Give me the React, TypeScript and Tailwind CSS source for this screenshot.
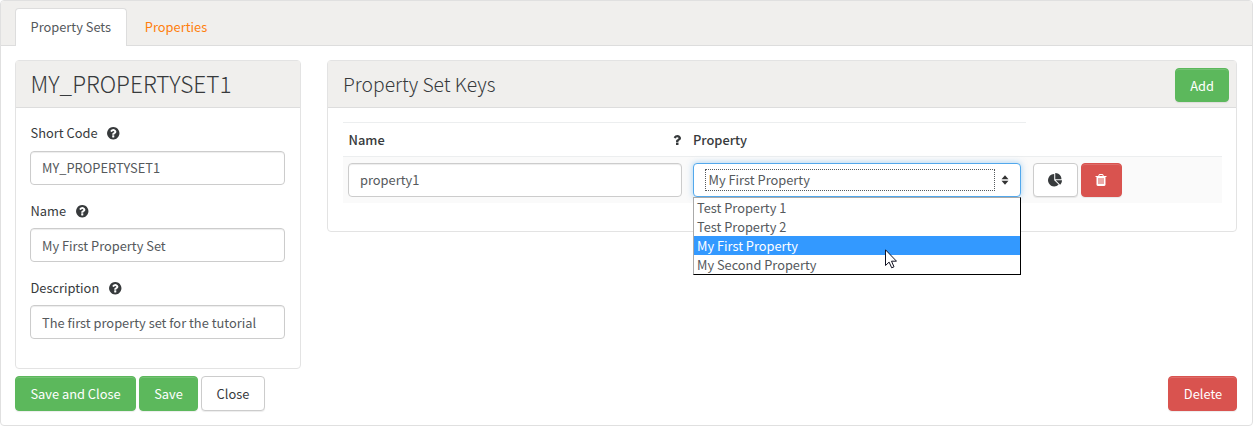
import type { ReactNode } from "react";

const QUESTION_CIRCLE =
  "M1024 1376v-192q0-14-9-23t-23-9h-192q-14 0-23 9t-9 23v192q0 14 9 23t23 9h192q14 0 23-9t9-23zm256-672q0-88-55.500-163t-138.500-116-170-41q-243 0-371 213-15 24 8 42l132 100q7 6 19 6 16 0 25-12 53-68 86-92 34-24 86-24 48 0 85.500 26t37.500 59q0 38-20 61t-68 45q-63 28-115.500 86.500t-52.500 125.500v36q0 14 9 23t23 9h192q14 0 23-9t9-23q0-19 21.500-49.500t54.500-49.500q32-18 49-28.500t46-35 44.500-48 28-60.500 12.500-81zm384 192q0 209-103 385.500t-279.500 279.500-385.500 103-385.500-103-279.500-279.500-103-385.500 103-385.500 279.500-279.500 385.500-103 385.500 103 279.500 279.500 103 385.500z";
const QUESTION =
  "M1088 1256v240q0 16-12 28t-28 12h-240q-16 0-28-12t-12-28v-240q0-16 12-28t28-12h240q16 0 28 12t12 28zm316-600q0 54-15.500 101t-35 76.500-55 59.500-57.500 43.500-61 35.500q-41 23-68.500 65t-27.500 67q0 17-12 32.500t-28 15.500h-240q-15 0-25.500-18.500t-10.500-37.500v-45q0-83 65-156.500t143-108.500q59-27 84-56t25-76q0-42-46.500-74t-107.500-32q-65 0-108 29-35 25-107 115-13 16-31 16-12 0-25-8l-164-125q-13-10-15.500-25t5.500-28q160-266 464-266 80 0 161 31t146 83 106 127.500 41 158.500z";
const PIE =
  "M768 890l546 546q-106 108-247.500 168t-298.500 60q-209 0-385.500-103t-279.500-279.500-103-385.500 103-385.500 279.500-279.500 385.500-103v762zm187 6h773q0 157-60 298.500t-168 247.500zm709-128h-768v-768q209 0 385.500 103t279.500 279.500 103 385.500z";
const TRASH =
  "M704 1376v-704q0-14-9-23t-23-9h-64q-14 0-23 9t-9 23v704q0 14 9 23t23 9h64q14 0 23-9t9-23zm256 0v-704q0-14-9-23t-23-9h-64q-14 0-23 9t-9 23v704q0 14 9 23t23 9h64q14 0 23-9t9-23zm256 0v-704q0-14-9-23t-23-9h-64q-14 0-23 9t-9 23v704q0 14 9 23t23 9h64q14 0 23-9t9-23zm-544-992h448l-48-117q-7-9-17-11h-317q-10 2-17 11zm928 32v64q0 14-9 23t-23 9h-96v948q0 83-47 143.500t-113 60.500h-832q-66 0-113-58.500t-47-141.500v-952h-96q-14 0-23-9t-9-23v-64q0-14 9-23t23-9h309l70-167q15-37 54-63t79-26h320q40 0 79 26t54 63l70 167h309q14 0 23 9t9 23z";

function Icon({ d, className }: { d: string; className: string }) {
  return (
    <svg viewBox="0 0 1792 1792" fill="currentColor" className={className} aria-hidden="true">
      <path d={d} />
    </svg>
  );
}

function Button({ tone, className, children }: { tone: "green" | "red" | "white"; className: string; children: ReactNode }) {
  const tones = {
    green: "bg-[#5cb85c] border-[#5cb85c] text-white",
    red: "bg-[#d9534f] border-[#d9534f] text-white",
    white: "bg-white border-[#ccc] text-[#373a3c]",
  };
  return (
    <button
      type="button"
      className={`flex shrink-0 items-center justify-center whitespace-nowrap rounded border shadow-[inset_0_1px_0_rgba(255,255,255,0.15),0_1px_1px_rgba(0,0,0,0.075)] ${tones[tone]} ${className}`}
    >
      {children}
    </button>
  );
}

function TextBox({ value, className }: { value: string; className: string }) {
  return (
    <div
      className={`flex h-[34px] items-center whitespace-nowrap rounded border border-[#ccc] bg-white pl-[11px] text-[#55595c] shadow-[inset_0_1px_1px_rgba(0,0,0,0.075)] ${className}`}
    >
      {value}
    </div>
  );
}

function Field({ label, value, boxClass = "mt-[7px] pt-[2px]" }: { label: string; value: string; boxClass?: string }) {
  return (
    <div className="flex flex-col">
      <div className="flex h-5 items-center gap-[8.5px] pl-[0.5px]">
        <span>{label}</span>
        <Icon d={QUESTION_CIRCLE} className="size-[14.5px]" />
      </div>
      <TextBox value={value} className={boxClass} />
    </div>
  );
}

const options = ["Test Property 1", "Test Property 2", "My First Property", "My Second Property"];

export default function App() {
  return (
    <div className="h-[426px] w-[1253px] overflow-hidden rounded border border-[#e0e0e0] bg-white font-['Noto_Sans_CJK_SC',sans-serif] text-[12.85px] leading-5 text-[#373a3c]">
      <div className="flex h-[45px] items-end border-b border-[#ddd] bg-[#f0efed] pl-[14px]">
        <div className="-mb-px flex h-[38px] w-28 items-center rounded-t border border-b-0 border-[#ddd] bg-white pb-px pl-[14.5px] text-[#55595c]">
          Property Sets
        </div>
        <div className="flex h-[37px] w-[98px] items-center justify-center text-[#ff7f0e]">Properties</div>
      </div>

      <div className="flex items-start gap-[26px] px-[14px] pt-[14px]">
        <section className="h-[309px] w-[286px] rounded border border-[#e3e3e3]">
          <h2 className="flex h-[47px] items-center border-b border-[#ddd] bg-[#f0efed] pl-[14.5px] text-[22.6px] font-light">
            MY_PROPERTYSET1
          </h2>
          <div className="flex flex-col gap-4 pt-[15px] pr-[15px] pl-[14px]">
            <Field label="Short Code" value="MY_PROPERTYSET1" boxClass="mt-2" />
            <Field label="Name" value="My First Property Set" />
            <Field label="Description" value="The first property set for the tutorial" />
          </div>
        </section>

        <section className="h-[172px] w-[910px] rounded border border-[#e3e3e3]">
          <div className="flex h-[47px] items-center justify-between border-b border-[#ddd] bg-[#f0efed] pr-[7px] pl-[15px]">
            <h2 className="text-[19.3px] font-light">Property Set Keys</h2>
            <Button tone="green" className="mt-[2px] h-[34px] w-[54px] pt-px">Add</Button>
          </div>
          <div className="px-[15px] pt-[14px]">
            <div className="flex h-[34px] w-[683px] items-center border-t border-[#eceeef] pl-[5.5px] font-medium">
              <span className="w-[321.5px]">Name</span>
              <Icon d={QUESTION} className="size-[14px]" />
              <span className="pl-[9px]">Property</span>
            </div>
            <div className="flex h-[47px] w-[879px] items-start border-t border-[#eceeef] bg-[#fafafa] pt-[6px] pl-[5px]">
              <TextBox value="property1" className="w-[334px]" />
              <div className="relative ml-[11px] h-[34px] w-[328px] rounded border border-[#52a8ec] bg-white text-[#55595c] shadow-[0_0_6px_rgba(82,168,236,0.5)]">
                <div className="flex h-full items-center gap-[6px] pl-[11px]">
                  <div className="flex h-[22px] w-[290px] items-center border border-dotted border-[#55595c] pl-[2.5px]">My First Property</div>
                  <svg viewBox="0 0 8 10" className="mb-px h-[10px] w-[8px] fill-[#333]" aria-hidden="true">
                    <path d="M4 0.200 7.500 4.200H.5zM4 9.800 .5 5.800h7z" />
                  </svg>
                </div>
                <div className="absolute top-[33px] -left-px w-[328px] border border-t-[#aaa] border-r-black border-b-black border-l-[#aaa] bg-white text-[12.8px]">
                  {options.map((o) => (
                    <div key={o} className={o === "My First Property" ? "h-[19px] bg-[#3399ff] pl-[3px] leading-[19px] text-white" : "h-[19px] pl-[3px] leading-[19px]"}>
                      {o}
                    </div>
                  ))}
                  <svg viewBox="0 0 12 20" className="absolute top-[51px] left-[191px] h-5 w-3" aria-hidden="true">
                    <path d="M.5.8v15.7l3.6-3.4 2.6 5.7 2.3-1-2.5-5.6h5z" fill="white" stroke="#101020" strokeWidth="1" />
                  </svg>
                </div>
              </div>
              <Button tone="white" className="ml-3 h-[34px] w-[45px] pr-px">
                <Icon d={PIE} className="size-[14.5px]" />
              </Button>
              <Button tone="red" className="ml-[3px] h-[34px] w-[41px] pr-px">
                <Icon d={TRASH} className="size-[14px]" />
              </Button>
            </div>
          </div>
        </section>
      </div>

      <div className="flex gap-[3px] px-[15px] pt-[7px] pl-[14px]">
        <Button tone="green" className="h-[35px] w-[121px]">Save and Close</Button>
        <Button tone="green" className="h-[35px] w-[59px]">Save</Button>
        <Button tone="white" className="h-[35px] w-16">Close</Button>
        <Button tone="red" className="ml-auto h-[35px] w-[69px] pl-px">Delete</Button>
      </div>
    </div>
  );
}
